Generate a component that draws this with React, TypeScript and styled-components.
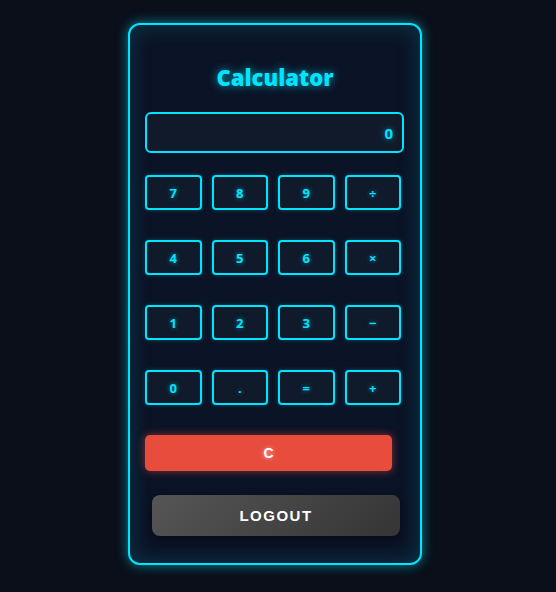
import React from "react";
import styled, { createGlobalStyle } from "styled-components";

const Global = createGlobalStyle`
  html, body { margin: 0; padding: 0; background: #0a0f1a; }
  body { font-family: "Open Sans", "Liberation Sans", sans-serif; }
`;

const Page = styled.div`
  display: flex;
  justify-content: center;
  padding: 23px 6px 0 0;
  min-height: 592px;
  box-sizing: border-box;
`;

const Card = styled.div`
  box-sizing: border-box;
  width: 294px;
  height: 542px;
  border: 2px solid #00e5ff;
  border-radius: 12px;
  background: #0b1326;
  box-shadow: 0 0 12px rgba(0, 229, 255, 0.55), inset 0 0 22px rgba(0, 229, 255, 0.18);
  padding: 0 15px;
  display: flex;
  flex-direction: column;
`;

const Title = styled.h1`
  margin: 37px 0 0;
  text-align: center;
  font-family: "Open Sans", "Liberation Sans", sans-serif;
  font-weight: 800;
  font-size: 22px;
  line-height: 30px;
  color: #00e5ff;
  text-shadow: 0 0 8px rgba(0, 229, 255, 0.7);
`;

const Display = styled.div`
  box-sizing: border-box;
  margin-top: 20px;
  height: 41px;
  width: 259px;
  border: 2px solid #00e5ff;
  border-radius: 6px;
  background: #101a2a;
  display: flex;
  align-items: center;
  justify-content: flex-end;
  padding-right: 9px;
  font-family: "Open Sans", "Liberation Sans", sans-serif;
  font-weight: 700;
  font-size: 15px;
  color: #00e5ff;
  text-shadow: 0 0 6px rgba(0, 229, 255, 0.6);
`;

const Keys = styled.div`
  margin-top: 22px;
  width: 256px;
  display: grid;
  grid-template-columns: repeat(4, 1fr);
  column-gap: 10px;
  row-gap: 30px;
`;

const Key = styled.button`
  box-sizing: border-box;
  height: 35px;
  border: 2px solid #00e5ff;
  border-radius: 4px;
  background: #0f1a2b;
  color: #00e5ff;
  font-family: "Open Sans", "Liberation Sans", sans-serif;
  font-weight: 700;
  font-size: 13px;
  padding: 0;
  text-shadow: 0 0 5px rgba(0, 229, 255, 0.6);
  box-shadow: 0 0 4px rgba(0, 229, 255, 0.25);
`;

const Clear = styled.button`
  box-sizing: border-box;
  margin-top: 30px;
  width: 247px;
  height: 36px;
  border: none;
  border-radius: 5px;
  background: #e74c3c;
  color: #ffffff;
  font-family: "Liberation Sans", "Open Sans", sans-serif;
  font-weight: 700;
  font-size: 14px;
  text-shadow: 0 0 4px rgba(255, 255, 255, 0.6);
  box-shadow: 0 0 8px rgba(231, 76, 60, 0.55);
`;

const Logout = styled.button`
  box-sizing: border-box;
  margin: 24px 0 0 7px;
  width: 248px;
  height: 41px;
  border: none;
  border-radius: 8px;
  background: linear-gradient(135deg, #555555, #353535);
  color: #ffffff;
  font-family: "Liberation Sans", "Open Sans", sans-serif;
  font-weight: 700;
  font-size: 15px;
  letter-spacing: 1.5px;
  box-shadow: 0 2px 8px rgba(0, 0, 0, 0.5);
`;

const keys = ["7", "8", "9", "÷", "4", "5", "6", "×", "1", "2", "3", "−", "0", ".", "=", "+"];

export default function App() {
  return (
    <>
      <Global />
      <Page>
        <Card>
          <Title>Calculator</Title>
          <Display>0</Display>
          <Keys>
            {keys.map((k) => (
              <Key key={k}>{k}</Key>
            ))}
          </Keys>
          <Clear>C</Clear>
          <Logout>LOGOUT</Logout>
        </Card>
      </Page>
    </>
  );
}
